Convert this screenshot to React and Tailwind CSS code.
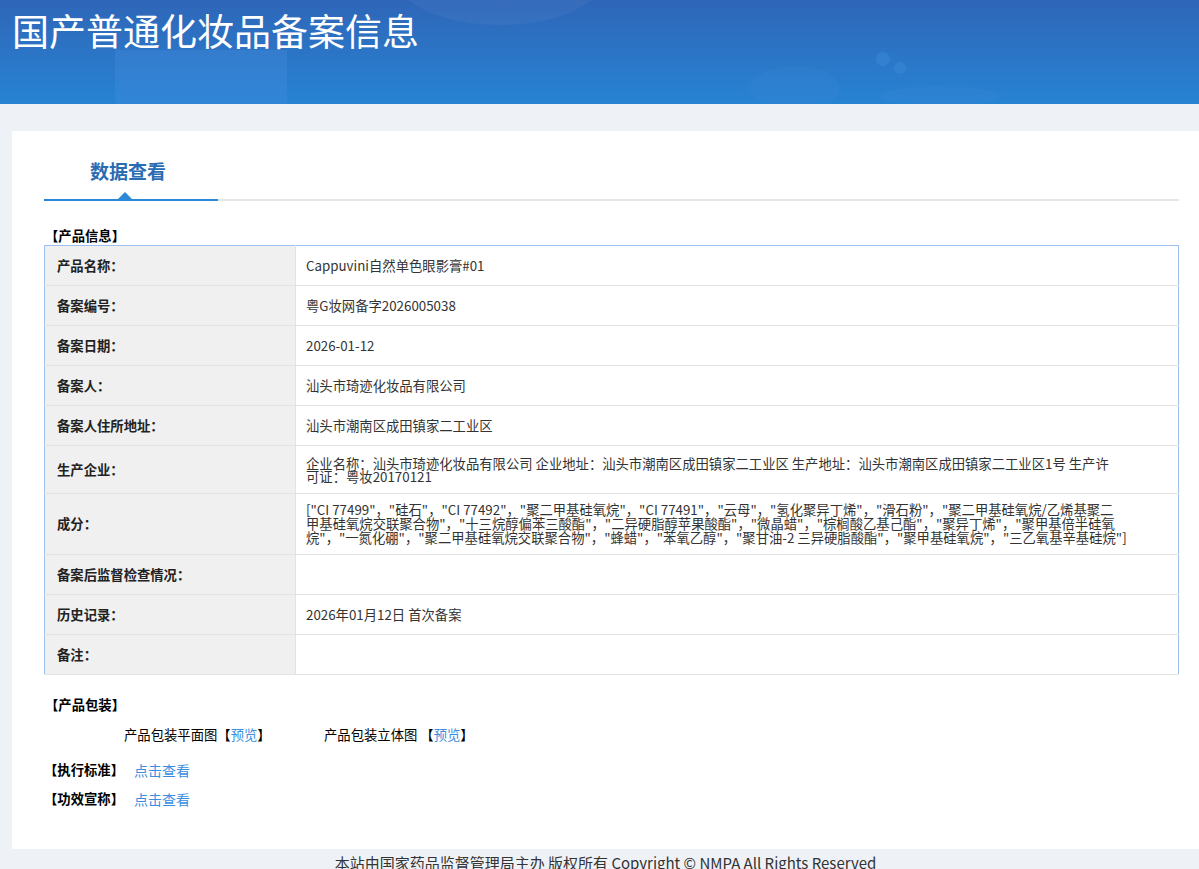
import React from 'react';

const rows = [
  { label: '产品名称：', value: ['Cappuvini自然单色眼影膏#01'] },
  { label: '备案编号：', value: ['粤G妆网备字2026005038'] },
  { label: '备案日期：', value: ['2026-01-12'] },
  { label: '备案人：', value: ['汕头市琦迹化妆品有限公司'] },
  { label: '备案人住所地址：', value: ['汕头市潮南区成田镇家二工业区'] },
  {
    label: '生产企业：',
    h: 'h-[48px]',
    lead: 'leading-[13px]',
    value: [
      '企业名称：汕头市琦迹化妆品有限公司 企业地址：汕头市潮南区成田镇家二工业区 生产地址：汕头市潮南区成田镇家二工业区1号 生产许',
      '可证：粤妆20170121',
    ],
  },
  {
    label: '成分：',
    h: 'h-[61px]',
    lead: 'leading-[14px]',
    value: [
      '["CI 77499"，"硅石"，"CI 77492"，"聚二甲基硅氧烷"，"CI 77491"，"云母"，"氢化聚异丁烯"，"滑石粉"，"聚二甲基硅氧烷/乙烯基聚二',
      '甲基硅氧烷交联聚合物"，"十三烷醇偏苯三酸酯"，"二异硬脂醇苹果酸酯"，"微晶蜡"，"棕榈酸乙基己酯"，"聚异丁烯"，"聚甲基倍半硅氧',
      '烷"，"一氮化硼"，"聚二甲基硅氧烷交联聚合物"，"蜂蜡"，"苯氧乙醇"，"聚甘油-2 三异硬脂酸酯"，"聚甲基硅氧烷"，"三乙氧基辛基硅烷"]',
    ],
  },
  { label: '备案后监督检查情况：', value: [] },
  { label: '历史记录：', value: ['2026年01月12日 首次备案'] },
  { label: '备注：', value: [] },
];

const App = () => {
  return (
    <div className="min-h-[869px] bg-[#eef2f6] font-['Noto_Sans_CJK_SC',sans-serif] text-[13.33px] text-[#333]">
      {/* Header */}
      <div className="relative h-[104px] overflow-hidden bg-gradient-to-b from-[#2e66b8] to-[#2783d3]">
        <svg className="absolute inset-0" width="1199" height="104" viewBox="0 0 1199 104">
          <rect x="115" y="50" width="172" height="54" fill="#4a90e0" opacity="0.3" />
          <ellipse cx="500" cy="-30" rx="110" ry="55" fill="#ffffff" opacity="0.04" />
          <ellipse cx="795" cy="88" rx="45" ry="22" fill="#3b8ad8" opacity="0.2" />
          <circle cx="883" cy="59" r="7" fill="#3a8ad8" opacity="0.5" />
          <circle cx="900" cy="68" r="6" fill="#3a8ad8" opacity="0.5" />
          <ellipse cx="940" cy="96" rx="60" ry="10" fill="#3b8ad8" opacity="0.2" />
        </svg>
        <h1 className="relative pl-[12px] pt-[10px] text-[37px] leading-[40px] font-normal text-white">
          国产普通化妆品备案信息
        </h1>
      </div>

      {/* Main card */}
      <div className="pt-[27px] pl-[12px]">
        <div className="h-[718px] bg-white pl-[32px] pr-[20px]">
          {/* Tab */}
          <div className="flex border-b-2 border-[#e6e6e6] pt-[28px]">
            <div className="relative -mb-[2px] w-[174px] border-b-2 border-[#2b87d8] pb-[16px] pl-[46px]">
              <span className="block text-[19px] leading-[24px] font-bold text-[#2a6cb4]">数据查看</span>
              <span className="absolute bottom-0 left-[74px] h-0 w-0 border-x-[7px] border-b-[7px] border-x-transparent border-b-[#2b87d8]" />
            </div>
          </div>

          <div className="mt-[26px] pl-[1px] leading-[18px] font-bold text-black">【产品信息】</div>

          <table className="w-full border-collapse border border-[#9dc1ec]">
            <tbody>
              {rows.map((r) => (
                <tr key={r.label} className={`${r.h || 'h-[40px]'} border-b border-[#e3e3e3]`}>
                  <td className="w-[251px] border-r border-[#e3e3e3] bg-[#f0f0f0] pl-[12px] font-bold text-[#222]">
                    {r.label}
                  </td>
                  <td className={`pl-[10px] ${r.lead || 'leading-[18px]'} whitespace-nowrap`}>
                    {r.value.map((line, i) => (
                      <div key={i}>{line}</div>
                    ))}
                  </td>
                </tr>
              ))}
            </tbody>
          </table>

          <div className="mt-[21px] pl-[1px] leading-[18px] font-bold text-black">【产品包装】</div>
          <div className="mt-[12px] flex pl-[80px] leading-[18px] text-black">
            <div className="w-[200px]">
              产品包装平面图【<span className="text-[#3a8ee0]">预览</span>】
            </div>
            <div>
              产品包装立体图 【<span className="text-[#3a8ee0]">预览</span>】
            </div>
          </div>
          <div className="mt-[17px] flex items-center gap-[10px] leading-[18px]">
            <span className="font-bold text-black">【执行标准】</span>
            <span className="text-[14px] text-[#3a8ee0]">点击查看</span>
          </div>
          <div className="mt-[11px] flex items-center gap-[10px] leading-[18px]">
            <span className="font-bold text-black">【功效宣称】</span>
            <span className="text-[14px] text-[#3a8ee0]">点击查看</span>
          </div>
        </div>
      </div>

      {/* Footer */}
      <div className="pt-[4px] pl-[12px] text-center text-[15px] leading-[20px] text-[#333]">
        本站由国家药品监督管理局主办 版权所有 Copyright © NMPA All Rights Reserved
      </div>
    </div>
  );
};

export default App;
